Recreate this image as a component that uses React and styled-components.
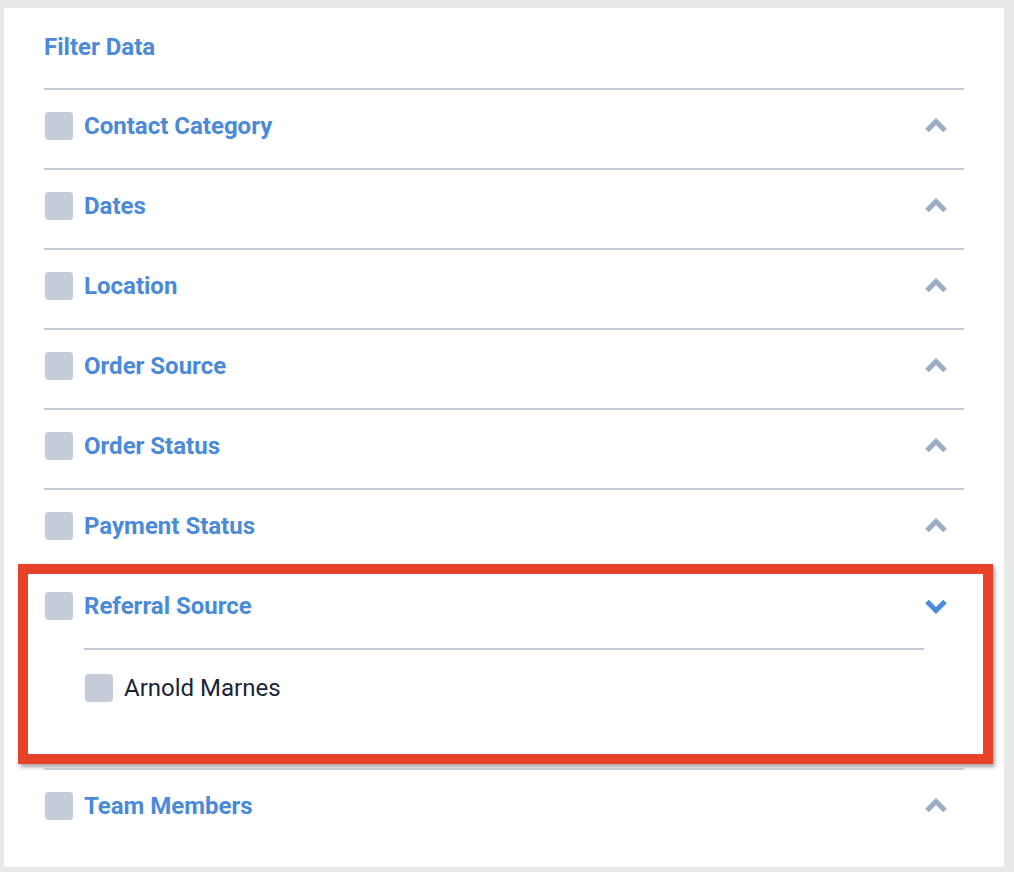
import React from "react";
import styled, { createGlobalStyle } from "styled-components";

const Global = createGlobalStyle`
  html, body { margin: 0; padding: 0; }
  body {
    background: #e8e9ea;
    font-family: Roboto, "Liberation Sans", Arial, sans-serif;
  }
`;

const Page = styled.div`
  padding: 8px 10px 5px 4px;
`;

const Panel = styled.div`
  background: #ffffff;
  padding: 0 40px 19px 40px;
`;

const Title = styled.h2`
  margin: 0;
  height: 80px;
  padding-top: 25px;
  box-sizing: border-box;
  font-size: 24px;
  line-height: 28px;
  font-weight: 700;
  color: #4a8ad9;
`;

const Section = styled.div`
  position: relative;
  border-top: 2px solid #c4cdd7;
`;

const Header = styled.div`
  display: flex;
  align-items: center;
  height: 78px;
  padding: 22px 0 28px;
  box-sizing: border-box;
`;

const Box = styled.span`
  flex: none;
  width: 28px;
  height: 28px;
  margin-left: 1px;
  border-radius: 4px;
  background: #c4cdd7;
`;

const Label = styled.span`
  margin-left: 11px;
  flex: 1;
  font-size: 24px;
  line-height: 28px;
  font-weight: 700;
  color: #4a8ad9;
`;

const Toggle = styled.span`
  flex: none;
  width: 24px;
  height: 16px;
  margin-right: 16px;
  display: flex;
  color: ${(p) => (p.$open ? "#4a8ad9" : "#98acc2")};
`;

const Body = styled.div`
  margin: 0 40px;
  border-top: 2px solid #c4cdd7;
  padding: 24px 0 66px;
`;

const Option = styled.div`
  display: flex;
  align-items: center;
  height: 28px;
`;

const OptionText = styled.span`
  margin-left: 11px;
  font-size: 24px;
  line-height: 28px;
  font-weight: 400;
  color: #1a2538;
`;

const Highlight = styled.div`
  position: absolute;
  left: -26px;
  top: -6px;
  width: 975px;
  height: 200px;
  box-sizing: border-box;
  border: 10px solid #e8432a;
  box-shadow: 2px 3px 4px rgba(0, 0, 0, 0.35);
  pointer-events: none;
`;

const Chevron = ({ open }) => (
  <svg width="24" height="16" viewBox="0 0 24 16">
    <polyline
      points={open ? "3,3.5 12,12.5 21,3.5" : "3,12.5 12,3.5 21,12.5"}
      fill="none"
      stroke="currentColor"
      strokeWidth="5"
      strokeLinecap="butt"
      strokeLinejoin="miter"
    />
  </svg>
);

const filters = [
  { name: "Contact Category" },
  { name: "Dates" },
  { name: "Location" },
  { name: "Order Source" },
  { name: "Order Status" },
  { name: "Payment Status" },
  { name: "Referral Source", open: true, options: ["Arnold Marnes"], marked: true },
  { name: "Team Members" },
];

export default function App() {
  return (
    <>
      <Global />
      <Page>
        <Panel>
          <Title>Filter Data</Title>
          {filters.map((f) => (
            <Section key={f.name}>
              <Header>
                <Box />
                <Label>{f.name}</Label>
                <Toggle $open={f.open}>
                  <Chevron open={f.open} />
                </Toggle>
              </Header>
              {f.open && (
                <Body>
                  {f.options.map((o) => (
                    <Option key={o}>
                      <Box />
                      <OptionText>{o}</OptionText>
                    </Option>
                  ))}
                </Body>
              )}
              {f.marked && <Highlight />}
            </Section>
          ))}
        </Panel>
      </Page>
    </>
  );
}
